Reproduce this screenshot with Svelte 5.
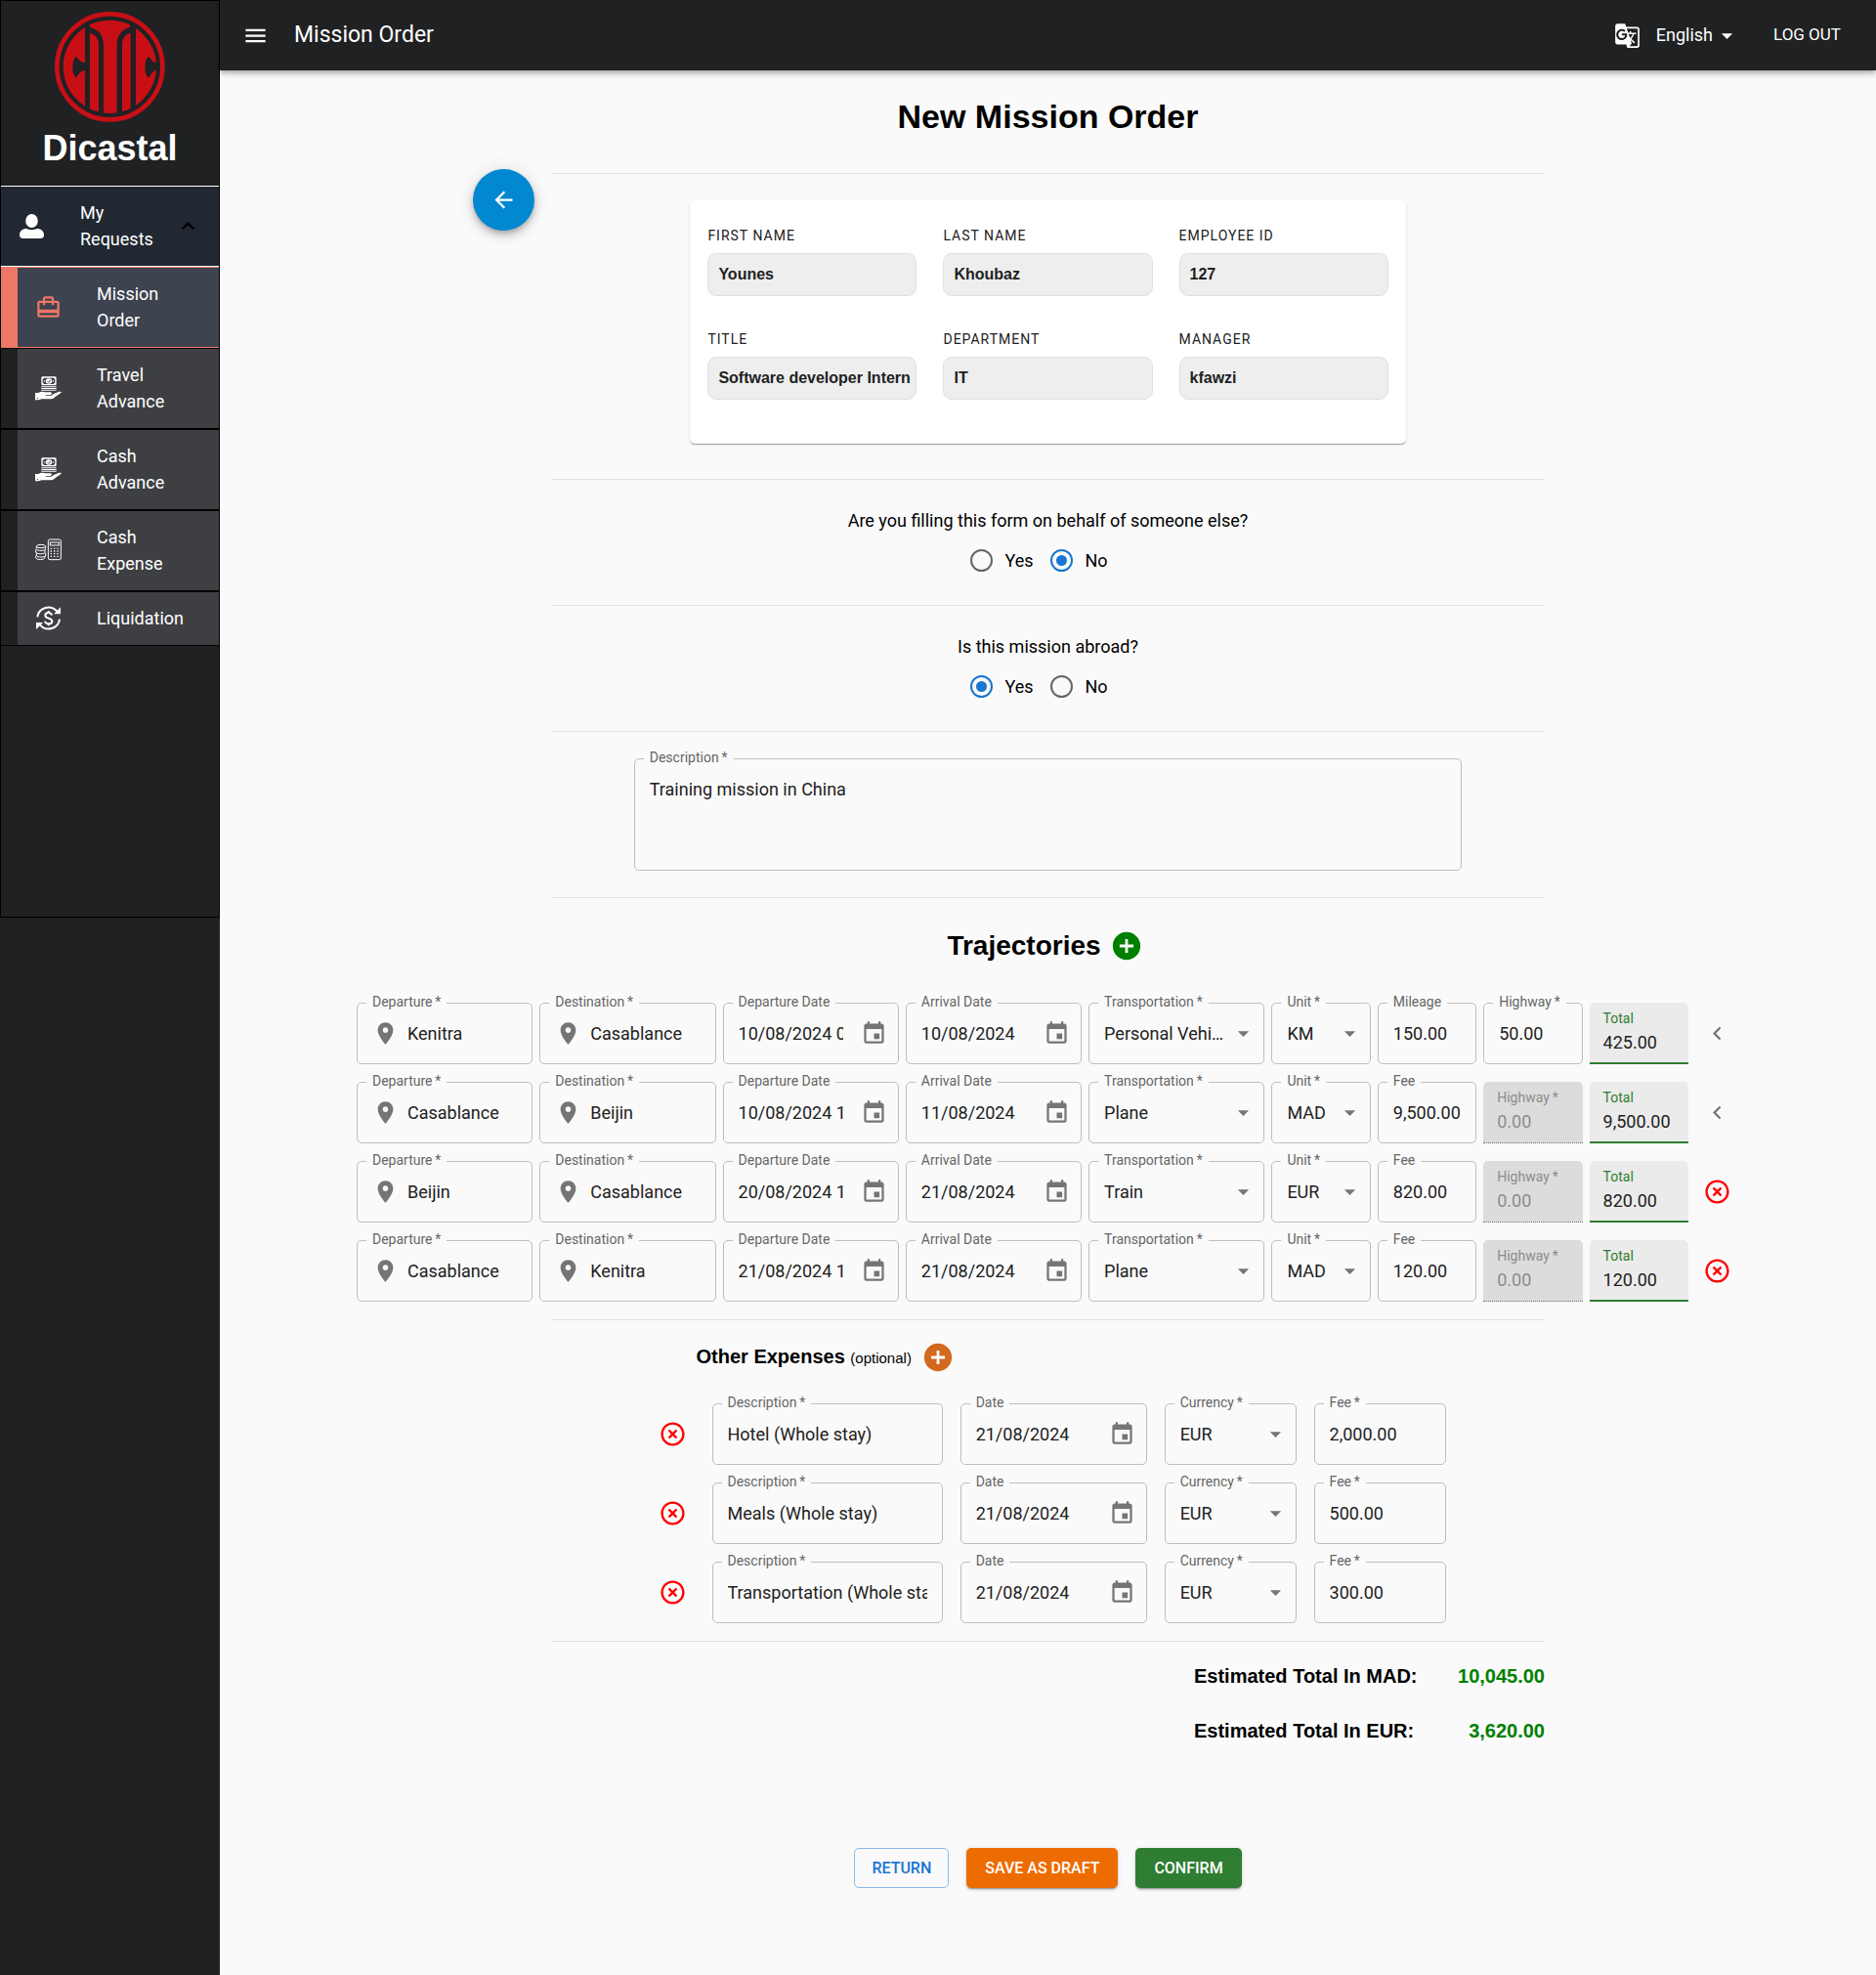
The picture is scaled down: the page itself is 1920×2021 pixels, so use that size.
<script>
  const paths = {
    menu: 'M3 18h18v-2H3v2zm0-5h18v-2H3v2zm0-7v2h18V6H3z',
    translate:
      'M21 4H11l-1-3H3c-1.1 0-2 .9-2 2v15c0 1.1.9 2 2 2h8l1 3h9c1.1 0 2-.9 2-2V6c0-1.1-.9-2-2-2zM7 16c-2.76 0-5-2.24-5-5s2.24-5 5-5c1.35 0 2.48.5 3.35 1.3L9.03 8.57c-.38-.36-1.04-.78-2.03-.78-1.74 0-3.15 1.44-3.15 3.21S5.26 14.21 7 14.21c2.01 0 2.84-1.44 2.92-2.41H7v-1.71h4.68c.07.31.12.61.12 1.02C11.8 13.97 9.89 16 7 16zm6.17-5.42h3.7c-.43 1.25-1.11 2.43-2.05 3.47-.31-.35-.6-.72-.86-1.1l-.79-2.37zm8.33 9.92c0 .55-.45 1-1 1H14l2-2.5-1.04-3.1 3.1 3.1.92-.92-3.3-3.25.02-.02c1.13-1.25 1.93-2.69 2.4-4.22H20v-1.3h-4.53V8h-1.29v1.29h-1.44L11.46 5.5h9.04c.55 0 1 .45 1 1v14z',
    drop: 'm7 10 5 5 5-5z',
    up: 'm12 8-6 6 1.41 1.41L12 10.83l4.59 4.58L18 14z',
    left: 'M15.41 7.41 14 6l-6 6 6 6 1.41-1.41L10.83 12z',
    back: 'M20 11H7.83l5.59-5.59L12 4l-8 8 8 8 1.41-1.41L7.83 13H20v-2z',
    pin: 'M12 2C8.13 2 5 5.13 5 9c0 5.25 7 13 7 13s7-7.75 7-13c0-3.87-3.13-7-7-7zm0 9.5c-1.38 0-2.5-1.12-2.5-2.5s1.12-2.5 2.5-2.5 2.5 1.12 2.5 2.5-1.12 2.5-2.5 2.5z',
    event:
      'M17 12h-5v5h5v-5zM16 1v2H8V1H6v2H5c-1.11 0-1.99.9-1.99 2L3 19c0 1.1.89 2 2 2h14c1.1 0 2-.9 2-2V5c0-1.1-.9-2-2-2h-1V1h-2zm3 18H5V8h14v11z',
    add: 'M12 2C6.48 2 2 6.48 2 12s4.48 10 10 10 10-4.48 10-10S17.52 2 12 2zm5 11h-4v4h-2v-4H7v-2h4V7h2v4h4v2z',
    remove:
      'M14.59 8 12 10.59 9.41 8 8 9.41 10.59 12 8 14.59 9.41 16 12 13.41 14.59 16 16 14.59 13.41 12 16 9.41 14.59 8zM12 2C6.47 2 2 6.47 2 12s4.47 10 10 10 10-4.47 10-10S17.53 2 12 2zm0 18c-4.41 0-8-3.59-8-8s3.59-8 8-8 8 3.59 8 8-3.59 8-8 8z',
    travel:
      'M20 6h-3V4c0-1.11-.89-2-2-2H9c-1.11 0-2 .89-2 2v2H4c-1.11 0-2 .89-2 2v11c0 1.11.89 2 2 2h16c1.11 0 2-.89 2-2V8c0-1.11-.89-2-2-2zM9 4h6v2H9V4zm11 15H4v-2h16v2zm0-5H4V8h3v2h2V8h6v2h2V8h3v6z'
  };

  const menu = [
    { label: 'Mission Order', icon: 'mission', active: true },
    { label: 'Travel Advance', icon: 'hand' },
    { label: 'Cash Advance', icon: 'hand' },
    { label: 'Cash Expense', icon: 'calc' },
    { label: 'Liquidation', icon: 'cycle' }
  ];

  const profile = [
    ['First name', 'Younes'],
    ['Last name', 'Khoubaz'],
    ['Employee ID', '127'],
    ['Title', 'Software developer Intern'],
    ['Department', 'IT'],
    ['Manager', 'kfawzi']
  ];

  const questions = [
    { name: 'behalf', text: 'Are you filling this form on behalf of someone else?', value: 'No' },
    { name: 'abroad', text: 'Is this mission abroad?', value: 'Yes' }
  ];

  const trips = [
    { from: 'Kenitra', to: 'Casablance', start: '10/08/2024 08:00', end: '10/08/2024', by: 'Personal Vehicle', unit: 'KM', feeLabel: 'Mileage', fee: '150.00', highway: '50.00', total: '425.00' },
    { from: 'Casablance', to: 'Beijin', start: '10/08/2024 12:00', end: '11/08/2024', by: 'Plane', unit: 'MAD', feeLabel: 'Fee', fee: '9,500.00', total: '9,500.00' },
    { from: 'Beijin', to: 'Casablance', start: '20/08/2024 12:00', end: '21/08/2024', by: 'Train', unit: 'EUR', feeLabel: 'Fee', fee: '820.00', total: '820.00', removable: true },
    { from: 'Casablance', to: 'Kenitra', start: '21/08/2024 12:00', end: '21/08/2024', by: 'Plane', unit: 'MAD', feeLabel: 'Fee', fee: '120.00', total: '120.00', removable: true }
  ];

  const expenses = [
    { text: 'Hotel (Whole stay)', fee: '2,000.00' },
    { text: 'Meals (Whole stay)', fee: '500.00' },
    { text: 'Transportation (Whole stay)', fee: '300.00' }
  ];

  const totals = [
    ['Estimated Total In MAD:', '10,045.00'],
    ['Estimated Total In EUR:', '3,620.00']
  ];

  const transports = ['Personal Vehicle', 'Plane', 'Train'];
  const units = ['KM', 'MAD', 'EUR'];

  let description = $state('Training mission in China');
</script>

{#snippet icon(name)}
  <svg class="icon" viewBox="0 0 24 24" aria-hidden="true"><path d={paths[name]} /></svg>
{/snippet}

{#snippet field(id, label, value, lead, trail)}
  <div class="field" class:trailing={trail}>
    <label for={id}>{label}</label>
    {#if lead}{@render icon(lead)}{/if}
    <input {id} type="text" {value} />
    {#if trail}
      <button type="button" class="plain" aria-label="Choose date">{@render icon(trail)}</button>
    {/if}
  </div>
{/snippet}

{#snippet picker(id, label, value, options)}
  <div class="field picker">
    <label for={id}>{label}</label>
    <select {id}>
      {#each options as option}
        <option selected={option === value}>{option}</option>
      {/each}
    </select>
    {@render icon('drop')}
  </div>
{/snippet}

{#snippet filled(id, label, value, disabled)}
  <div class="filled" class:disabled>
    <label for={id}>{label}</label>
    <input {id} type="text" {value} {disabled} readonly />
  </div>
{/snippet}

{#snippet navIcon(name)}
  {#if name === 'mission'}
    {@render icon('travel')}
  {:else if name === 'hand'}
    <svg class="icon" viewBox="0 0 81 81" aria-hidden="true">
      <rect x="21" y="6" width="42" height="23" rx="2" fill="none" stroke="#fff" stroke-width="4" />
      <path d="M21 6h9l-9 8zM63 6h-9l9 8zM21 29h9l-9-8zM63 29h-9l9-8z" />
      <ellipse cx="42" cy="18" rx="10" ry="8" />
      <path d="m38 19 3 3 6-7" fill="none" stroke="#3e3f42" stroke-width="3" />
      <circle cx="28" cy="18" r="2" /><circle cx="56" cy="18" r="2" />
      <path d="M19 34h46v3H19zM19 39h46v3H19zM19 44h46v3H19z" />
      <path d="M0 54h10c6-4 14-5 21-2h14c8 0 8 6 0 8H32v2h16c4 0 6-2 7-4l15-6c7-3 13-1 9 2L58 69c-3 3-7 4-11 4H20l-9 3H0z" />
      <circle cx="7" cy="70" r="2" fill="#3e3f42" />
    </svg>
  {:else if name === 'calc'}
    <svg class="icon line" viewBox="0 0 81 81" aria-hidden="true">
      <ellipse cx="18" cy="27" rx="14" ry="5" />
      <path d="M4 27v8c0 7 28 7 28 0v-8M2 37v8c0 7 28 7 28 0v-8M4 47v8c0 7 28 7 28 0v-8M2 56v5c0 9 28 9 28 0v-5" />
      <rect x="40" y="6" width="39" height="62" rx="5" />
      <rect x="46" y="15" width="27" height="9" />
      <path d="M47 34h4M57 34h4M67 34h4M47 42h4M57 42h4M67 42h4M47 50h4M57 50h4M67 50h4M47 58h4M57 58h4M67 58h4" stroke-width="4" />
    </svg>
  {:else}
    <svg class="icon cycle" viewBox="0 0 81 81" aria-hidden="true">
      <path d="M7 37A34 34 0 0 1 67 20M75 44A34 34 0 0 1 15 61" />
      <path class="solid" d="M78 7v21H57zM3 75V54h21z" />
      <path d="M51 32c-1-6-5-8-10-8-6 0-10 3-10 8 0 6 5 7 10 9s11 3 11 9c0 5-5 8-11 8s-10-3-11-8M41 18v7M41 57v7" />
    </svg>
  {/if}
{/snippet}

<div class="page">
  <aside>
    <div class="side">
      <div class="brand">
        <svg class="logo" viewBox="168 36 339 339" role="img" aria-label="Dicastal logo">
          <clipPath id="disc"><circle cx="337" cy="205" r="143" /></clipPath>
          <circle cx="337" cy="205" r="162" fill="none" stroke="#c90f16" stroke-width="14" />
          <g clip-path="url(#disc)" fill="#c90f16">
            <path d="M190 50h71v143c-12-1-18-8-25-18-7-2-13 14-13 31s6 32 13 32c5-12 12-20 25-22v144h-71z" />
            <path d="M417 50h73v143h-10c-12-1-15-10-22-18-7-2-13 14-13 31s6 32 13 32c5-12 12-20 22-22h10v144h-73z" />
            <path d="M276 60h124v23c-25 8-41 22-41 55v222h-41V138c0-33-17-47-42-55z" />
            <path d="M276 101c18 5 27 18 27 38v221h-27zM401 101c-18 5-26 18-26 38v221h26z" />
          </g>
        </svg>
        <strong>Dicastal</strong>
      </div>
      <nav>
        <button type="button" class="group" aria-expanded="true">
          <svg class="icon" viewBox="0 0 27 27" aria-hidden="true">
            <ellipse cx="13.5" cy="8" rx="6.3" ry="7" />
            <path d="M1 22.5c0-4 3-6.500 7-6.500 3 1.500 8 1.500 11 0 4 0 7 2.500 7 6.500 0 2.500-1.500 3.500-3.500 3.500h-18c-2 0-3.500-1-3.500-3.500z" />
          </svg>
          <span>My Requests</span>
          {@render icon('up')}
        </button>
        <ul>
          {#each menu as item}
            <li>
              <a href="#{item.icon}" class:active={item.active}>
                {@render navIcon(item.icon)}
                <span>{item.label}</span>
              </a>
            </li>
          {/each}
        </ul>
      </nav>
    </div>
  </aside>

  <div class="content">
    <header>
      <button type="button" class="plain" aria-label="Toggle menu">{@render icon('menu')}</button>
      <span class="where">Mission Order</span>
      <button type="button" class="plain language" aria-haspopup="listbox">
        {@render icon('translate')}<span>English</span>{@render icon('drop')}
      </button>
      <button type="button" class="plain logout">LOG OUT</button>
    </header>

    <main>
      <h1>New Mission Order</h1>

      <div class="intro">
        <button type="button" class="fab" aria-label="Go back">{@render icon('back')}</button>
        <div class="center">
          <hr />
          <section class="card">
            {#each profile as [label, value], i}
              <div class="info">
                <label for="profile-{i}">{label}</label>
                <input id="profile-{i}" type="text" {value} readonly />
              </div>
            {/each}
          </section>
        </div>
      </div>

      {#each questions as q}
        <hr />
        <div class="question" role="radiogroup" aria-labelledby="{q.name}-text">
          <p id="{q.name}-text">{q.text}</p>
          <div class="answers">
            {#each ['Yes', 'No'] as answer}
              <label>
                <input type="radio" name={q.name} value={answer} checked={q.value === answer} />
                {answer}
              </label>
            {/each}
          </div>
        </div>
      {/each}
      <hr />

      <div class="field description">
        <label for="description">Description&thinsp;*</label>
        <textarea id="description" bind:value={description}></textarea>
      </div>
      <hr />

      <div class="heading">
        <h2>Trajectories</h2>
        <button type="button" class="plain add" aria-label="Add trajectory">{@render icon('add')}</button>
      </div>

      <div class="trips">
        {#each trips as t, i}
          <div class="trip">
            {@render field(`from-${i}`, 'Departure\u2009*', t.from, 'pin')}
            {@render field(`to-${i}`, 'Destination\u2009*', t.to, 'pin')}
            {@render field(`start-${i}`, 'Departure Date', t.start, null, 'event')}
            {@render field(`end-${i}`, 'Arrival Date', t.end, null, 'event')}
            {@render picker(`by-${i}`, 'Transportation\u2009*', t.by, transports)}
            {@render picker(`unit-${i}`, 'Unit\u2009*', t.unit, units)}
            {@render field(`fee-${i}`, t.feeLabel, t.fee)}
            {#if t.highway}
              {@render field(`highway-${i}`, 'Highway\u2009*', t.highway)}
            {:else}
              {@render filled(`highway-${i}`, 'Highway\u2009*', '0.00', true)}
            {/if}
            {@render filled(`total-${i}`, 'Total', t.total, false)}
            {#if t.removable}
              <button type="button" class="plain remove" aria-label="Remove trajectory">{@render icon('remove')}</button>
            {:else}
              <button type="button" class="plain expand" aria-label="Show details">{@render icon('left')}</button>
            {/if}
          </div>
        {/each}
      </div>
      <hr />

      <div class="expenses">
        <div class="subheading">
          <h3>Other Expenses <small>(optional)</small></h3>
          <button type="button" class="plain add" aria-label="Add expense">{@render icon('add')}</button>
        </div>
        {#each expenses as e, i}
          <div class="expense">
            <button type="button" class="plain remove" aria-label="Remove expense">{@render icon('remove')}</button>
            {@render field(`expense-${i}`, 'Description\u2009*', e.text)}
            {@render field(`expense-date-${i}`, 'Date', '21/08/2024', null, 'event')}
            {@render picker(`expense-currency-${i}`, 'Currency\u2009*', 'EUR', ['MAD', 'EUR'])}
            {@render field(`expense-fee-${i}`, 'Fee\u2009*', e.fee)}
          </div>
        {/each}
      </div>
      <hr />

      <dl class="totals">
        {#each totals as [label, value]}
          <div><dt>{label}</dt><dd>{value}</dd></div>
        {/each}
      </dl>

      <div class="actions">
        <button type="button" class="return">RETURN</button>
        <button type="button" class="draft">SAVE AS DRAFT</button>
        <button type="button" class="confirm">CONFIRM</button>
      </div>
    </main>
  </div>
</div>

<style>
  :global(body) {
    background: #fafafa;
  }
  .page,
  .page * {
    box-sizing: border-box;
  }
  .page {
    display: flex;
    min-height: 100vh;
    font: 18px/27px Roboto, 'Liberation Sans', sans-serif;
    color: #000;
  }
  button,
  input,
  select,
  textarea {
    font: inherit;
    color: inherit;
    margin: 0;
  }
  button {
    cursor: pointer;
  }
  .icon {
    display: block;
    flex: none;
    width: 27px;
    height: 27px;
    fill: currentColor;
  }
  .plain {
    display: flex;
    align-items: center;
    justify-content: center;
    padding: 0;
    border: 0;
    background: none;
  }

  /* Sidebar */
  aside {
    flex: none;
    width: 225px;
    background: #202123;
    color: #fff;
  }
  .side {
    padding-bottom: 277px;
    border: 1px solid #000;
  }
  .brand {
    display: flex;
    flex-direction: column;
    align-items: center;
    gap: 6px;
    padding: 11px 0 18px;
  }
  .logo {
    display: block;
    width: 113px;
    height: 113px;
  }
  .brand strong {
    font: bold 36px/41px 'Liberation Sans', Arial, sans-serif;
  }
  .group {
    display: flex;
    align-items: center;
    width: 100%;
    padding: 13px 18px 14px;
    border: 1px solid #fff;
    border-width: 1px 0;
    background: #212832;
    text-align: left;
  }
  .group span {
    flex: 1;
    width: 0;
    padding-left: 36px;
    margin-right: 16px;
  }
  .group .icon:last-child {
    color: #000;
  }
  ul {
    margin: 0;
    padding: 0;
    list-style: none;
  }
  li a {
    display: flex;
    align-items: center;
    gap: 36px;
    padding: 13px 18px 14px 35px;
    border: 1px solid #000;
    border-width: 1px 0;
    background: linear-gradient(to right, #202123 17px, #3e3f42 17px);
    color: #fff;
    text-decoration: none;
  }
  li a.active {
    border-color: #ef7766;
    background: linear-gradient(to right, #ef7766 17px, #3d434f 17px);
  }
  li a.active .icon {
    color: #ef7766;
  }
  .line {
    fill: none;
    stroke: #fff;
    stroke-width: 3;
  }
  .cycle {
    fill: none;
    stroke: #fff;
    stroke-width: 6;
  }
  .solid {
    fill: #fff;
    stroke: none;
  }

  /* Top bar */
  .content {
    flex: 1;
    min-width: 0;
  }
  header {
    display: flex;
    align-items: center;
    height: 72px;
    padding: 0 36px 0 23px;
    background: #202123;
    color: #fff;
    box-shadow:
      0 2px 4px -1px rgba(0, 0, 0, 0.2),
      0 4px 5px rgba(0, 0, 0, 0.14),
      0 1px 10px rgba(0, 0, 0, 0.12);
  }
  .where,
  .language span,
  .logout {
    padding-bottom: 2px;
  }
  .where {
    flex: 1;
    margin-left: 26px;
    font-size: 23px;
  }
  .language span {
    margin: 0 1px 0 16px;
  }
  .logout {
    margin-left: 34px;
    font-size: 17px;
  }

  /* Form */
  main {
    padding: 22px 0 88px;
  }
  h1,
  h2,
  h3,
  p,
  dl,
  dd {
    margin: 0;
  }
  h1,
  h2,
  h3,
  .totals {
    font-family: 'Liberation Sans', Arial, sans-serif;
    font-weight: bold;
  }
  h1 {
    margin-bottom: 29px;
    font-size: 34px;
    line-height: 50px;
    text-align: center;
  }
  hr {
    width: 60%;
    height: 1px;
    margin: 0 auto;
    border: 0;
    background: #e2e2e2;
  }
  .intro {
    display: grid;
    grid-template-columns: 20% 60%;
    align-items: start;
    margin-bottom: 36px;
  }
  .fab {
    display: flex;
    align-items: center;
    justify-content: center;
    justify-self: end;
    width: 63px;
    height: 63px;
    margin-right: 17px;
    border: 0;
    border-radius: 50%;
    background: #0288d1;
    color: #fff;
    box-shadow:
      0 3px 5px -1px rgba(0, 0, 0, 0.2),
      0 6px 10px rgba(0, 0, 0, 0.14),
      0 1px 18px rgba(0, 0, 0, 0.12);
  }
  .center hr {
    width: 100%;
    margin-top: 4px;
  }
  .card {
    display: grid;
    grid-template-columns: repeat(3, minmax(0, 1fr));
    gap: 34px 27px;
    width: 72%;
    margin: 27px auto 0;
    padding: 26px 18px 45px;
    border-radius: 5px;
    background: #fff;
    box-shadow:
      0 2px 1px -1px rgba(0, 0, 0, 0.2),
      0 1px 1px rgba(0, 0, 0, 0.14),
      0 1px 3px rgba(0, 0, 0, 0.12);
  }
  .info label {
    display: block;
    margin-bottom: 8px;
    font-size: 14px;
    line-height: 20px;
    letter-spacing: 1px;
    text-transform: uppercase;
    color: #212121;
  }
  .info input {
    display: block;
    width: 100%;
    height: 44px;
    padding: 0 5px 0 10px;
    border: 1px solid #e0e0e0;
    border-radius: 9px;
    background: #eee;
    color: #212121;
    font: bold 16px/24px 'Liberation Sans', Arial, sans-serif;
  }
  .question {
    padding: 28px 0 32px;
    text-align: center;
  }
  .answers {
    display: flex;
    justify-content: center;
    margin-top: 14px;
  }
  .answers label {
    display: flex;
    align-items: center;
    gap: 12px;
    margin-right: 18px;
  }
  input[type='radio'] {
    appearance: none;
    width: 23px;
    height: 23px;
    border: 2px solid #666;
    border-radius: 50%;
  }
  input[type='radio']:checked {
    border-color: #1976d2;
    background: #1976d2;
    background-clip: content-box;
    padding: 4px;
  }

  /* Outlined text field: the label covers a notch of the border */
  .field {
    position: relative;
    display: flex;
    align-items: center;
    min-width: 0;
    height: 63px;
    padding: 0 15px;
    border: 1px solid #bebebe;
    border-radius: 5px;
    color: #757575;
  }
  .trailing {
    padding-right: 11px;
  }
  .field label {
    position: absolute;
    top: -11px;
    left: 9px;
    padding: 0 6px;
    background: #fafafa;
    font-size: 14px;
    line-height: 18px;
    color: #666;
    white-space: nowrap;
  }
  .field input,
  .field select,
  .field textarea {
    flex: 1;
    width: 0;
    min-width: 0;
    height: 27px;
    padding: 0;
    border: 0;
    background: none;
    color: #212121;
    outline: 0;
  }
  .field .icon + input {
    margin-left: 9px;
  }
  .field input + .plain {
    margin-left: 18px;
    color: inherit;
  }
  .picker {
    padding-right: 7px;
  }
  .field select {
    appearance: none;
    margin-right: 6px;
    overflow: hidden;
    text-overflow: ellipsis;
    white-space: nowrap;
  }
  .description {
    width: 50%;
    height: 115px;
    margin: 27px auto;
    padding: 17px 15px;
  }
  .field textarea {
    height: 100%;
    resize: none;
  }
  .filled {
    display: flex;
    flex-direction: column;
    min-width: 0;
    height: 63px;
    padding: 7px 13px 0 14px;
    border-bottom: 2px solid #2e7d32;
    border-radius: 5px 5px 0 0;
    background: #ebebeb;
  }
  .filled label {
    font-size: 14px;
    line-height: 18px;
    color: #2e7d32;
  }
  .filled input {
    width: 100%;
    height: 27px;
    margin-top: 2px;
    padding: 0;
    border: 0;
    background: none;
    color: #212121;
  }
  .disabled {
    border-bottom: 1px dotted #757575;
    background: #dcdcdc;
  }
  .disabled label,
  .disabled input {
    color: #8c8c8c;
  }

  .heading,
  .subheading {
    display: flex;
    align-items: center;
    height: 36px;
  }
  .heading {
    justify-content: center;
    gap: 9px;
    margin: 31px 0 40px;
    padding-right: 6px;
  }
  h2 {
    font-size: 28px;
    line-height: 36px;
  }
  .add .icon {
    width: 34px;
    height: 34px;
  }
  .heading .add {
    color: #008000;
  }
  .subheading .add {
    color: #d2691e;
  }
  .remove {
    color: #f00;
  }
  .remove .icon {
    width: 29px;
    height: 29px;
  }
  .expand {
    color: #757575;
  }
  .trips {
    display: grid;
    gap: 18px;
    margin: 0 140px 18px;
  }
  .trip {
    display: grid;
    grid-template-columns: repeat(5, minmax(0, 16fr)) repeat(4, minmax(0, 9fr)) 45px;
    gap: 7px;
  }
  .trip .field:nth-child(7) {
    padding-right: 10px;
  }
  .expenses {
    display: grid;
    gap: 18px;
    width: 814px;
    max-width: 100%;
    margin: 20px auto 18px;
  }
  .subheading {
    gap: 10px;
    margin-bottom: 11px;
    padding-left: 47px;
  }
  h3 {
    font-size: 20px;
    line-height: 27px;
  }
  small {
    font-size: 15px;
    font-weight: normal;
  }
  .expense {
    display: grid;
    grid-template-columns: 45px minmax(0, 7fr) 191px minmax(0, 4fr) minmax(0, 4fr);
    gap: 18px;
  }
  .totals {
    display: grid;
    gap: 29px;
    width: 359px;
    margin: 22px 20% 106px auto;
    font-size: 20px;
  }
  .totals div {
    display: flex;
    justify-content: space-between;
  }
  dd {
    color: #008000;
  }
  .actions {
    display: flex;
    justify-content: center;
    gap: 18px;
  }
  .actions button {
    height: 41px;
    padding: 0 19px;
    border: 0;
    border-radius: 5px;
    color: #fff;
    font-size: 16px;
    font-weight: 500;
    box-shadow:
      0 3px 1px -2px rgba(0, 0, 0, 0.2),
      0 2px 2px rgba(0, 0, 0, 0.14),
      0 1px 5px rgba(0, 0, 0, 0.12);
  }
  .actions .return {
    padding: 0 17px;
    border: 1px solid #8cbae8;
    background: none;
    color: #1976d2;
    box-shadow: none;
  }
  .actions .draft {
    background: #ed6c02;
  }
  .actions .confirm {
    background: #2e7d32;
  }
</style>
